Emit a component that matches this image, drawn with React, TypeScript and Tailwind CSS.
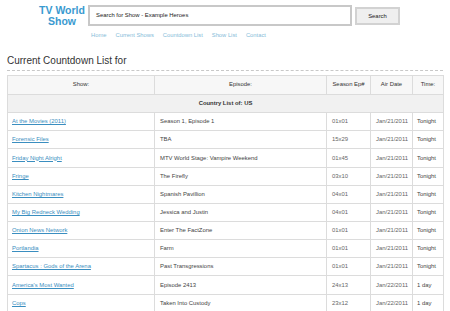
import React from "react";

const rows: [string, string, string, string, string][] = [
  ["At the Movies (2011)", "Season 1, Episode 1", "01x01", "Jan/21/2011", "Tonight"],
  ["Forensic Files", "TBA", "15x29", "Jan/21/2011", "Tonight"],
  ["Friday Night Alright", "MTV World Stage: Vampire Weekend", "01x45", "Jan/21/2011", "Tonight"],
  ["Fringe", "The Firefly", "03x10", "Jan/21/2011", "Tonight"],
  ["Kitchen Nightmares", "Spanish Pavillion", "04x01", "Jan/21/2011", "Tonight"],
  ["My Big Redneck Wedding", "Jessica and Justin", "04x01", "Jan/21/2011", "Tonight"],
  ["Onion News Network", "Enter The FactZone", "01x01", "Jan/21/2011", "Tonight"],
  ["Portlandia", "Farm", "01x01", "Jan/21/2011", "Tonight"],
  ["Spartacus : Gods of the Arena", "Past Transgressions", "01x01", "Jan/21/2011", "Tonight"],
  ["America's Most Wanted", "Episode 2413", "24x13", "Jan/22/2011", "1 day"],
  ["Cops", "Taken Into Custody", "23x12", "Jan/22/2011", "1 day"],
];

export default function App() {
  return (
    <div
      className="w-[450px] h-[311px] overflow-hidden bg-white"
      style={{ fontFamily: '"Liberation Sans", Arial, sans-serif' }}
    >
      <div className="flex items-start pt-[5px]">
        <div className="ml-[36px] w-[52px] text-center font-bold text-[10.5px] leading-[10.5px] text-[#3a9ad0] whitespace-nowrap">
          <div>TV World</div>
          <div>Show</div>
        </div>
        <div>
          <div className="flex items-start">
            <div className="w-[264px] h-[21px] border-2 border-[#c8c8c8] bg-white flex items-center pl-[6px] text-[5.9px] text-[#222]">
              Search for Show - Example Heroes
            </div>
            <div className="ml-[3px] mt-[2px] w-[45px] h-[18px] border-2 border-[#d2d2d2] bg-[#efefef] flex items-center justify-center text-[5.9px] text-[#222]">
              Search
            </div>
          </div>
          <div className="flex gap-[9px] pl-[3px] mt-[5px] text-[5.8px] text-[#86bcd9]">
            <span>Home</span>
            <span>Current Shows</span>
            <span>Countdown List</span>
            <span>Show List</span>
            <span>Contact</span>
          </div>
        </div>
      </div>
      <div className="px-[7px]">
        <div className="mt-[15px] text-[10px] leading-[12px] text-[#333] pb-[3px] border-b border-dashed border-[#c8c8c8]">
          Current Countdown List for
        </div>
        <table className="mt-[4px] w-[436px] border-collapse table-fixed text-[5.9px] text-[#444]">
          <colgroup>
            <col className="w-[147px]" />
            <col className="w-[172px]" />
            <col className="w-[44px]" />
            <col className="w-[42px]" />
            <col className="w-[31px]" />
          </colgroup>
          <thead>
            <tr className="h-[19px] bg-[#f7f7f7]">
              <th className="border border-[#dcdcdc] font-normal text-[#333]">Show:</th>
              <th className="border border-[#dcdcdc] font-normal text-[#333]">Episode:</th>
              <th className="border border-[#dcdcdc] font-normal text-[#333]">Season Ep#</th>
              <th className="border border-[#dcdcdc] font-normal text-[#333]">Air Date</th>
              <th className="border border-[#dcdcdc] font-normal text-[#333]">Time:</th>
            </tr>
          </thead>
          <tbody>
            <tr className="h-[18.5px] bg-[#f1f1f1]">
              <td colSpan={5} className="border border-[#dcdcdc] text-center font-bold text-[#333]">
                Country List of: US
              </td>
            </tr>
            {rows.map((r, i) => (
              <tr key={i} className="h-[18.15px]">
                <td className="border border-[#dcdcdc] pl-[4px]">
                  <a className="text-[#3a8ec0] underline">{r[0]}</a>
                </td>
                <td className="border border-[#dcdcdc] pl-[5px]">{r[1]}</td>
                <td className="border border-[#dcdcdc] pl-[5px] text-[#666]">{r[2]}</td>
                <td className="border border-[#dcdcdc] pl-[5px] text-[#666]">{r[3]}</td>
                <td className="border border-[#dcdcdc] pl-[4px]">{r[4]}</td>
              </tr>
            ))}
          </tbody>
        </table>
      </div>
    </div>
  );
}
